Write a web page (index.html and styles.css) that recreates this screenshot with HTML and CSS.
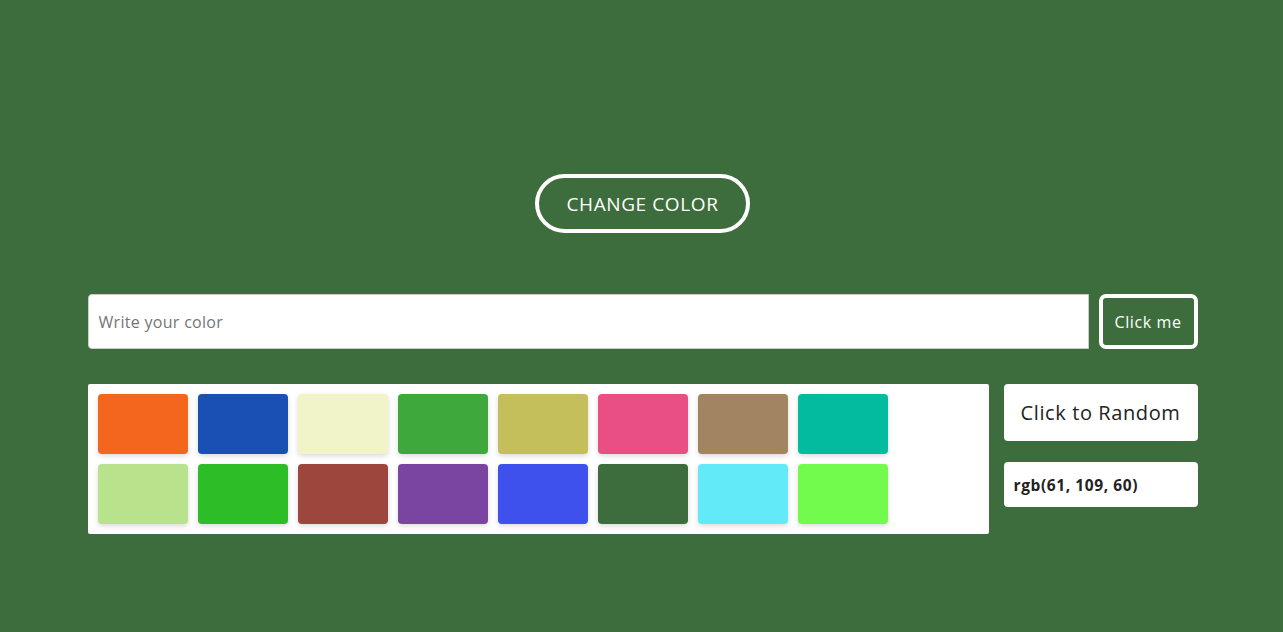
FILE: index.html
```html
<!DOCTYPE html>
<html>
<head>
<meta charset="utf-8">
<link rel="stylesheet" href="styles.css">
</head>
<body>
<main class="page">
  <div class="top">
    <button class="change-btn">CHANGE COLOR</button>
  </div>
  <div class="input-row">
    <input class="color-input" type="text" placeholder="Write your color">
    <button class="click-btn">Click me</button>
  </div>
  <div class="bottom-row">
    <div class="palette">
      <div class="swatch" style="background:#f4661e"></div>
      <div class="swatch" style="background:#1a4fb4"></div>
      <div class="swatch" style="background:#f1f3c9"></div>
      <div class="swatch" style="background:#3fa83c"></div>
      <div class="swatch" style="background:#c4bf5b"></div>
      <div class="swatch" style="background:#e94e84"></div>
      <div class="swatch" style="background:#a28560"></div>
      <div class="swatch" style="background:#03bc9f"></div>
      <div class="swatch" style="background:#b8e38c"></div>
      <div class="swatch" style="background:#2dbd26"></div>
      <div class="swatch" style="background:#9d463d"></div>
      <div class="swatch" style="background:#7a45a0"></div>
      <div class="swatch" style="background:#3f51ec"></div>
      <div class="swatch" style="background:#3d6d3c"></div>
      <div class="swatch" style="background:#62eaf8"></div>
      <div class="swatch" style="background:#72fa4d"></div>
    </div>
    <div class="side">
      <button class="random-btn">Click to Random</button>
      <div class="rgb-box">rgb(61, 109, 60)</div>
    </div>
  </div>
</main>
</body>
</html>
```
FILE: styles.css
```css
* { box-sizing: border-box; }
html, body { margin: 0; padding: 0; }
body {
  background: #3d6d3c;
  font-family: "Open Sans", "Liberation Sans", sans-serif;
  height: 632px;
  overflow: hidden;
}
.page {
  width: 1110px;
  margin: 0 auto;
  padding-top: 174px;
  position: relative;
  left: 1px;
}
.top {
  display: flex;
  justify-content: center;
}
.change-btn {
  width: 215px;
  height: 59px;
  border: 4px solid #fff;
  border-radius: 30px;
  background: transparent;
  color: #fff;
  font-family: inherit;
  font-size: 19px;
  letter-spacing: 0.6px;
  padding: 0;
}
.input-row {
  display: flex;
  gap: 10px;
  margin-top: 61px;
}
.color-input {
  width: 1001px;
  height: 55px;
  border: 1px solid #ccc;
  border-radius: 4px 0 0 4px;
  padding: 0 10px;
  font-family: inherit;
  font-size: 16px;
  letter-spacing: 0.3px;
  outline: none;
}
.color-input::placeholder { color: #757575; }
.click-btn {
  width: 99px;
  height: 55px;
  border: 4px solid #fff;
  border-radius: 7px;
  background: #3d6d3c;
  color: #fff;
  font-family: inherit;
  font-size: 16px;
  letter-spacing: 0.6px;
  padding: 0;
}
.bottom-row {
  display: flex;
  gap: 15px;
  margin-top: 35px;
  align-items: flex-start;
}
.palette {
  width: 901px;
  height: 150px;
  background: #fff;
  border-radius: 2px;
  padding: 10px;
  display: grid;
  grid-template-columns: repeat(8, 90px);
  grid-auto-rows: 60px;
  gap: 10px;
}
.swatch {
  border-radius: 4px;
  box-shadow: 0 2px 5px rgba(0,0,0,0.15);
}
.side {
  width: 194px;
  display: flex;
  flex-direction: column;
  gap: 21px;
}
.random-btn {
  height: 57px;
  background: #fff;
  border: none;
  border-radius: 4px;
  color: #222;
  font-family: inherit;
  font-size: 20px;
  letter-spacing: 0.6px;
  padding: 0;
}
.rgb-box {
  height: 45px;
  background: #fff;
  border-radius: 4px;
  padding: 0 10px;
  display: flex;
  align-items: center;
  font-weight: 700;
  font-size: 15.5px;
  letter-spacing: 0.6px;
  color: #222;
}
```
